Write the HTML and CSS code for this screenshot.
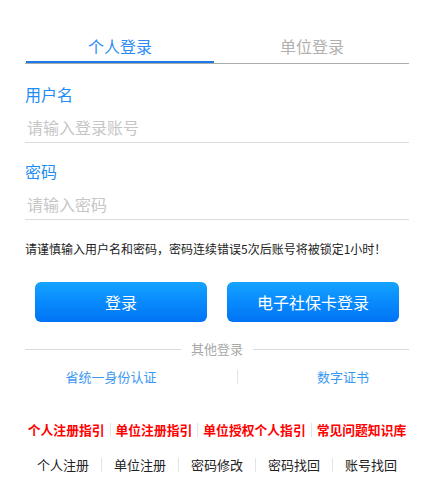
FILE: index.html
```html
<!DOCTYPE html>
<html lang="zh-CN">
<head>
<meta charset="utf-8">
<title>登录</title>
<link rel="stylesheet" href="styles.css">
</head>
<body>
<div class="login">
  <div class="tabs">
    <div class="tab active">个人登录</div>
    <div class="tab">单位登录</div>
  </div>

  <div class="field first">
    <div class="label">用户名</div>
    <input class="input" type="text" placeholder="请输入登录账号">
  </div>
  <div class="field">
    <div class="label">密码</div>
    <input class="input" type="password" placeholder="请输入密码">
  </div>

  <p class="notice">请谨慎输入用户名和密码，密码连续错误5次后账号将被锁定1小时！</p>

  <div class="buttons">
    <button class="btn">登录</button>
    <button class="btn">电子社保卡登录</button>
  </div>

  <div class="divider">
    <span class="line"></span>
    <span class="divider-text">其他登录</span>
    <span class="line"></span>
  </div>

  <div class="other">
    <a class="other-left">省统一身份认证</a>
    <span class="other-gap"><span class="vsep"></span></span>
    <a class="other-right">数字证书</a>
  </div>

  <div class="guides">
    <a class="guide">个人注册指引</a>
    <span class="vsep"></span>
    <a class="guide">单位注册指引</a>
    <span class="vsep"></span>
    <a class="guide">单位授权个人指引</a>
    <span class="vsep"></span>
    <a class="guide">常见问题知识库</a>
  </div>

  <div class="actions">
    <a class="action">个人注册</a>
    <span class="vsep"></span>
    <a class="action">单位注册</a>
    <span class="vsep"></span>
    <a class="action">密码修改</a>
    <span class="vsep"></span>
    <a class="action">密码找回</a>
    <span class="vsep"></span>
    <a class="action">账号找回</a>
  </div>
</div>
</body>
</html>
```

FILE: styles.css
```css
* { box-sizing: border-box; }

body {
  margin: 0;
  background: #fff;
  font-family: "Microsoft YaHei", "Noto Sans CJK SC", sans-serif;
}

.login {
  width: 384px;
  margin-left: 25px;
  padding-top: 34px;
}

.tabs {
  display: flex;
  border-bottom: 1px solid #acacac;
}

.tab {
  flex: 1;
  margin: 0 3px 0 1px;
  text-align: center;
  font-size: 16px;
  line-height: 24px;
  padding-bottom: 3px;
  color: #b0b0b0;
  border-bottom: 2px solid transparent;
}

.tab.active {
  color: #2c8cf4;
  border-bottom-color: #1a7ae8;
}

.field.first { margin-top: 20px; }
.field + .field { margin-top: 18px; }

.label {
  font-size: 16px;
  line-height: 20px;
  color: #1e8cf6;
}

.input {
  display: block;
  width: 100%;
  height: 31px;
  margin-top: 8px;
  padding: 0 2px;
  border: 0;
  border-bottom: 1px solid #dcdcdc;
  outline: none;
  font-family: inherit;
  font-size: 16px;
  color: #333;
  background: transparent;
}

.input::placeholder { color: #c6c6c6; }

.notice {
  margin: 20px 0 0;
  font-size: 12px;
  line-height: 18px;
  color: #222;
}

.buttons {
  display: flex;
  justify-content: center;
  gap: 20px;
  margin-top: 24px;
}

.btn {
  width: 172px;
  height: 40px;
  border: 0;
  border-radius: 6px;
  background: linear-gradient(180deg, #14a4ff 0%, #0a8cfd 45%, #0074f4 100%);
  color: #fff;
  font-family: inherit;
  font-size: 16px;
  padding: 0;
}

.divider {
  display: flex;
  align-items: center;
  margin-top: 17px;
  line-height: 20px;
}

.line {
  flex: 1;
  height: 1px;
  background: #dadada;
}

.divider-text {
  padding: 0 10px;
  font-size: 13px;
  color: #a8a8a8;
}

.other {
  display: flex;
  align-items: center;
  margin-top: 8px;
  line-height: 20px;
  font-size: 13px;
  color: #3a98f2;
}

.other-left { width: 172px; text-align: center; }
.other-gap { width: 80px; display: flex; justify-content: center; }
.other-right { flex: 1; text-align: center; }

.vsep {
  display: block;
  width: 1px;
  height: 14px;
  background: #e4e4e4;
  flex: none;
}

.guides {
  display: flex;
  justify-content: center;
  align-items: center;
  margin-top: 33px;
  line-height: 20px;
  font-size: 12.8px;
  font-weight: bold;
  color: #ff0000;
  white-space: nowrap;
}

.guide { padding: 0 5px; }
.guide:first-child { padding-left: 0; }
.guide:last-child { padding-right: 0; }

.actions {
  display: flex;
  justify-content: center;
  align-items: center;
  margin-top: 15px;
  line-height: 20px;
  font-size: 13px;
  color: #222;
}

.action {
  width: 79px;
  text-align: center;
}
```
